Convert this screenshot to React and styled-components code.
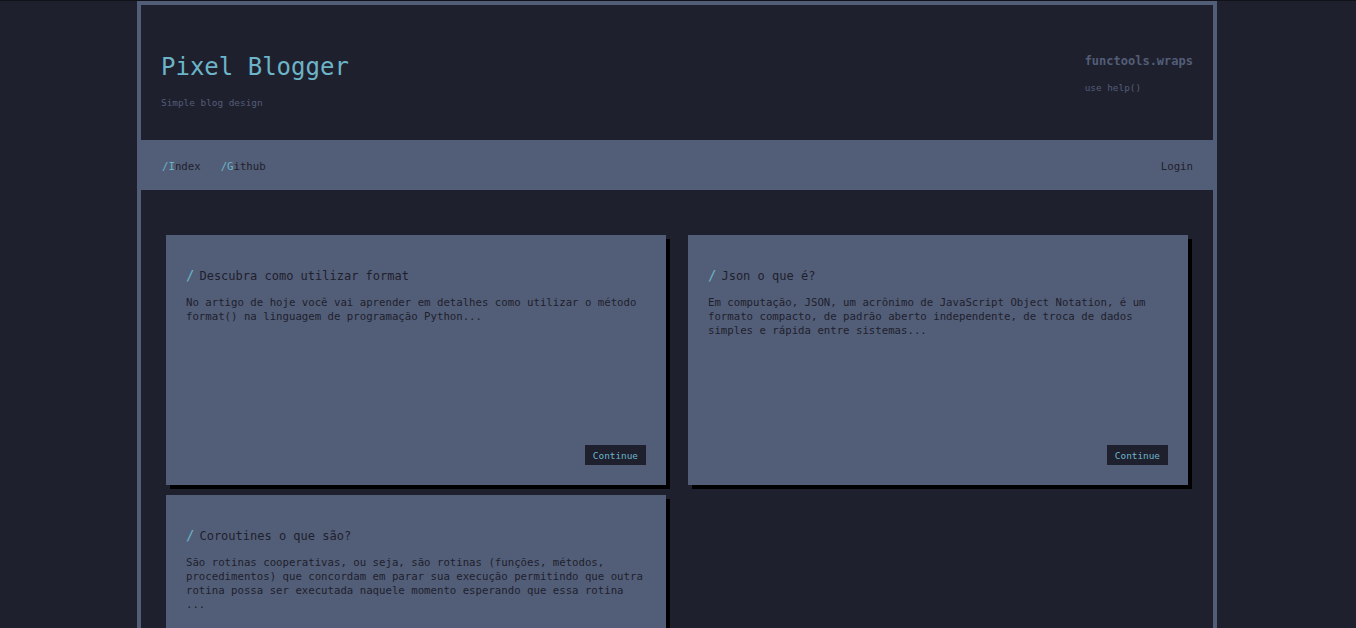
import React from "react";
import styled, { createGlobalStyle } from "styled-components";

const c = {
  bg: "#1f202e",
  slate: "#525e77",
  cyan: "#6cb4c8",
  ink: "#1f202e",
};

const GlobalStyle = createGlobalStyle`
  html, body {
    margin: 0;
    padding: 0;
    background: ${c.bg};
    font-family: "DejaVu Sans Mono", "Liberation Mono", monospace;
  }
  body {
    border-top: 1px solid #111219;
  }
`;

const posts = [
  {
    title: "Descubra como utilizar format",
    text: "No artigo de hoje você vai aprender em detalhes como utilizar o método format() na linguagem de programação Python...",
  },
  {
    title: "Json o que é?",
    text: "Em computação, JSON, um acrônimo de JavaScript Object Notation, é um formato compacto, de padrão aberto independente, de troca de dados simples e rápida entre sistemas...",
  },
  {
    title: "Coroutines o que são?",
    text: "São rotinas cooperativas, ou seja, são rotinas (funções, métodos, procedimentos) que concordam em parar sua execução permitindo que outra rotina possa ser executada naquele momento esperando que essa rotina ...",
  },
];

const App = () => {
  return (
    <>
      <GlobalStyle />
      <Page>
        <Header>
          <Brand>
            <Title>Pixel Blogger</Title>
            <Subtitle>Simple blog design</Subtitle>
          </Brand>
          <Aside>
            <AsideTitle>functools.wraps</AsideTitle>
            <AsideText>use help()</AsideText>
          </Aside>
        </Header>
        <Nav>
          <NavLinks>
            <NavLink href="#">
              <Accent>/I</Accent>ndex
            </NavLink>
            <NavLink href="#">
              <Accent>/G</Accent>ithub
            </NavLink>
          </NavLinks>
          <NavLink href="#">Login</NavLink>
        </Nav>
        <Content>
          <Grid>
            {posts.map((p) => (
              <Card key={p.title}>
                <CardTitle>
                  <Slash>/</Slash>
                  {p.title}
                </CardTitle>
                <CardText>{p.text}</CardText>
                <CardFooter>
                  <Button>Continue</Button>
                </CardFooter>
              </Card>
            ))}
          </Grid>
        </Content>
      </Page>
    </>
  );
};

const Page = styled.div`
  width: 1080px;
  box-sizing: border-box;
  margin: 0 0 0 137px;
  border: 4px solid ${c.slate};
  border-bottom: none;
  min-height: 700px;
`;

const Header = styled.header`
  height: 135px;
  display: flex;
  justify-content: space-between;
  padding: 0 20px 0 20px;
`;

const Brand = styled.div`
  padding-top: 47px;
`;

const Title = styled.h1`
  margin: 0;
  font-size: 24px;
  line-height: 30px;
  font-weight: normal;
  color: ${c.cyan};
`;

const Subtitle = styled.p`
  margin: 15px 0 0;
  font-size: 9.4px;
  line-height: 12px;
  color: ${c.slate};
`;

const Aside = styled.div`
  padding-top: 46px;
`;

const AsideTitle = styled.p`
  margin: 0;
  font-size: 12px;
  line-height: 20px;
  color: ${c.slate};
  font-weight: bold;
`;

const AsideText = styled.p`
  margin: 11px 0 0;
  font-size: 9.4px;
  line-height: 12px;
  color: ${c.slate};
`;

const Nav = styled.nav`
  margin: 0 -4px;
  height: 50px;
  box-sizing: border-box;
  background: ${c.slate};
  display: flex;
  align-items: center;
  justify-content: space-between;
  padding: 2px 24px 0 25px;
`;

const NavLinks = styled.div`
  display: flex;
  gap: 20px;
`;

const NavLink = styled.a`
  color: ${c.ink};
  font-size: 10.7px;
  text-decoration: none;
`;

const Accent = styled.span`
  color: ${c.cyan};
`;

const Content = styled.main`
  padding: 45px 24px 0 25px;
`;

const Grid = styled.div`
  display: grid;
  grid-template-columns: 500px 500px;
  column-gap: 22px;
  row-gap: 10px;
`;

const Card = styled.article`
  min-height: 250px;
  box-sizing: border-box;
  background: ${c.slate};
  box-shadow: 4px 4px 0 #000;
  padding: 30px 20px 20px;
  display: flex;
  flex-direction: column;
`;

const CardTitle = styled.h2`
  margin: 0;
  font-size: 12px;
  line-height: 20px;
  font-weight: normal;
  color: ${c.ink};
`;

const Slash = styled.span`
  color: ${c.cyan};
  margin-right: 5px;
  font-size: 14px;
`;

const CardText = styled.p`
  margin: 10px 0 0;
  font-size: 10.7px;
  line-height: 14px;
  color: ${c.ink};
  flex: 1;
`;

const CardFooter = styled.div`
  display: flex;
  justify-content: flex-end;
`;

const Button = styled.button`
  height: 20px;
  padding: 0 8px;
  border: none;
  background: ${c.ink};
  color: ${c.cyan};
  font-family: inherit;
  font-size: 9.4px;
  cursor: pointer;
`;

export default App;
